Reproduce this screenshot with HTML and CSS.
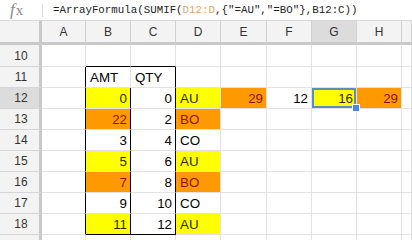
FILE: index.html
```
<!DOCTYPE html>
<html>
<head>
<meta charset="utf-8">
<title>Sheet - SUMIF array formula</title>
<link rel="stylesheet" href="styles.css">
</head>
<body>

<!-- formula bar -->
<div class="fbar">
	<span class="fx"><i>f</i>x</span>
	<span class="fsep"></span>
	<span class="formula">=ArrayFormula(SUMIF(<span class="ref">D12:D</span>,{"=AU","=BO"},B12:C))</span>
</div>

<div class="sheet">
	<div class="row head">
		<div class="rh"></div>
		<div class="ch">A</div><div class="ch">B</div><div class="ch">C</div><div class="ch">D</div>
		<div class="ch">E</div><div class="ch">F</div><div class="ch sel">G</div><div class="ch">H</div><div class="ch"></div>
	</div>

	<div class="row r10">
		<div class="rh">10</div>
		<div class="c"></div><div class="c bb"></div><div class="c bb"></div><div class="c"></div>
		<div class="c"></div><div class="c"></div><div class="c"></div><div class="c"></div><div class="c"></div>
	</div>

	<div class="row">
		<div class="rh">11</div>
		<div class="c br"></div><div class="c t">AMT</div><div class="c t br">QTY</div><div class="c"></div>
		<div class="c"></div><div class="c"></div><div class="c"></div><div class="c"></div><div class="c"></div>
	</div>

	<div class="row">
		<div class="rh sel">12</div>
		<div class="c br"></div><div class="c n yel br">0</div><div class="c n br">0</div><div class="c t yel">AU</div>
		<div class="c n org">29</div><div class="c n">12</div><div class="c n yel cur">16<span class="handle"></span></div><div class="c n org">29</div><div class="c"></div>
	</div>

	<div class="row">
		<div class="rh">13</div>
		<div class="c br"></div><div class="c n org br">22</div><div class="c n br">2</div><div class="c t org">BO</div>
		<div class="c"></div><div class="c"></div><div class="c"></div><div class="c"></div><div class="c"></div>
	</div>

	<div class="row">
		<div class="rh">14</div>
		<div class="c br"></div><div class="c n br">3</div><div class="c n br">4</div><div class="c t">CO</div>
		<div class="c"></div><div class="c"></div><div class="c"></div><div class="c"></div><div class="c"></div>
	</div>

	<div class="row">
		<div class="rh">15</div>
		<div class="c br"></div><div class="c n yel br">5</div><div class="c n br">6</div><div class="c t yel">AU</div>
		<div class="c"></div><div class="c"></div><div class="c"></div><div class="c"></div><div class="c"></div>
	</div>

	<div class="row">
		<div class="rh">16</div>
		<div class="c br"></div><div class="c n org br">7</div><div class="c n br">8</div><div class="c t org">BO</div>
		<div class="c"></div><div class="c"></div><div class="c"></div><div class="c"></div><div class="c"></div>
	</div>

	<div class="row">
		<div class="rh">17</div>
		<div class="c br"></div><div class="c n br">9</div><div class="c n br">10</div><div class="c t">CO</div>
		<div class="c"></div><div class="c"></div><div class="c"></div><div class="c"></div><div class="c"></div>
	</div>

	<div class="row">
		<div class="rh">18</div>
		<div class="c br"></div><div class="c n yel br bb">11</div><div class="c n br bb">12</div><div class="c t yel">AU</div>
		<div class="c"></div><div class="c"></div><div class="c"></div><div class="c"></div><div class="c"></div>
	</div>

	<div class="row">
		<div class="rh">19</div>
		<div class="c"></div><div class="c"></div><div class="c"></div><div class="c"></div>
		<div class="c"></div><div class="c"></div><div class="c"></div><div class="c"></div><div class="c"></div>
	</div>
</div>

</body>
</html>
```

FILE: styles.css
```
body {
	margin: 0;
	background: #ffffff;
	font-family: "Liberation Sans", Arial, sans-serif;
	overflow: hidden;
}

/* formula bar */
.fbar {
	height: 21px;
	box-sizing: border-box;
	border-bottom: 1px solid #d9d9d9;
	display: flex;
	align-items: center;
}
.fx {
	width: 42px;
	box-sizing: border-box;
	padding-left: 10px;
	font-family: "Liberation Serif", serif;
	font-size: 15px;
	color: #8a8a8a;
}
.fx i {
	font-size: 17px;
	margin-right: 1px;
}
.fsep {
	width: 1px;
	height: 13px;
	background: #dadada;
	margin-right: 10px;
}
.formula {
	font-family: "Liberation Mono", monospace;
	font-size: 10.8px;
	color: #222222;
}
.formula .ref {
	color: #e0a563;
}

/* grid */
.row {
	display: grid;
	grid-template-columns: 42px 44px 45px 45px 45px 46px 45px 45px 45px 1fr;
	height: 21px;
}
.row.head {
	height: 24px;
}
.row.r10 {
	height: 22px;
}
.rh {
	background: #f3f3f3;
	border-right: 3px solid #c9c9c9;
	border-bottom: 1px solid #d6d6d6;
	box-sizing: border-box;
	font-size: 12px;
	color: #333333;
	display: flex;
	align-items: center;
	justify-content: center;
	padding-left: 3px;
}
.rh.sel {
	background: #dcdcdc;
}
.ch {
	background: #f3f3f3;
	border-right: 1px solid #d0d0d0;
	border-bottom: 3px solid #c9c9c9;
	box-sizing: border-box;
	font-size: 12px;
	color: #333333;
	display: flex;
	align-items: center;
	justify-content: center;
	padding-top: 1px;
}
.ch.sel {
	background: #dcdcdc;
}
.head .rh {
	border-bottom: 3px solid #c9c9c9;
}

.c {
	position: relative;
	border-right: 1px solid #e2e2e2;
	border-bottom: 1px solid #e2e2e2;
	box-sizing: border-box;
	font-size: 10pt;
	color: #000000;
	display: flex;
	align-items: center;
	padding-top: 1px;
}
.c.n {
	justify-content: flex-end;
	padding-right: 3px;
}
.c.t {
	padding-left: 4px;
}
.c.br {
	border-right-color: #000000;
}
.c.bb {
	border-bottom-color: #000000;
}
.yel {
	background: #ffff00;
	color: #2a2a00;
}
.org {
	background: #ff9900;
	color: #8c1400;
}

/* current cell */
.cur {
	box-shadow: inset 0 0 0 2px #5f8db5;
}
.handle {
	position: absolute;
	right: -4px;
	bottom: -4px;
	width: 6px;
	height: 6px;
	background: #4a86e8;
	border: 1px solid #ffffff;
	z-index: 2;
}
```
